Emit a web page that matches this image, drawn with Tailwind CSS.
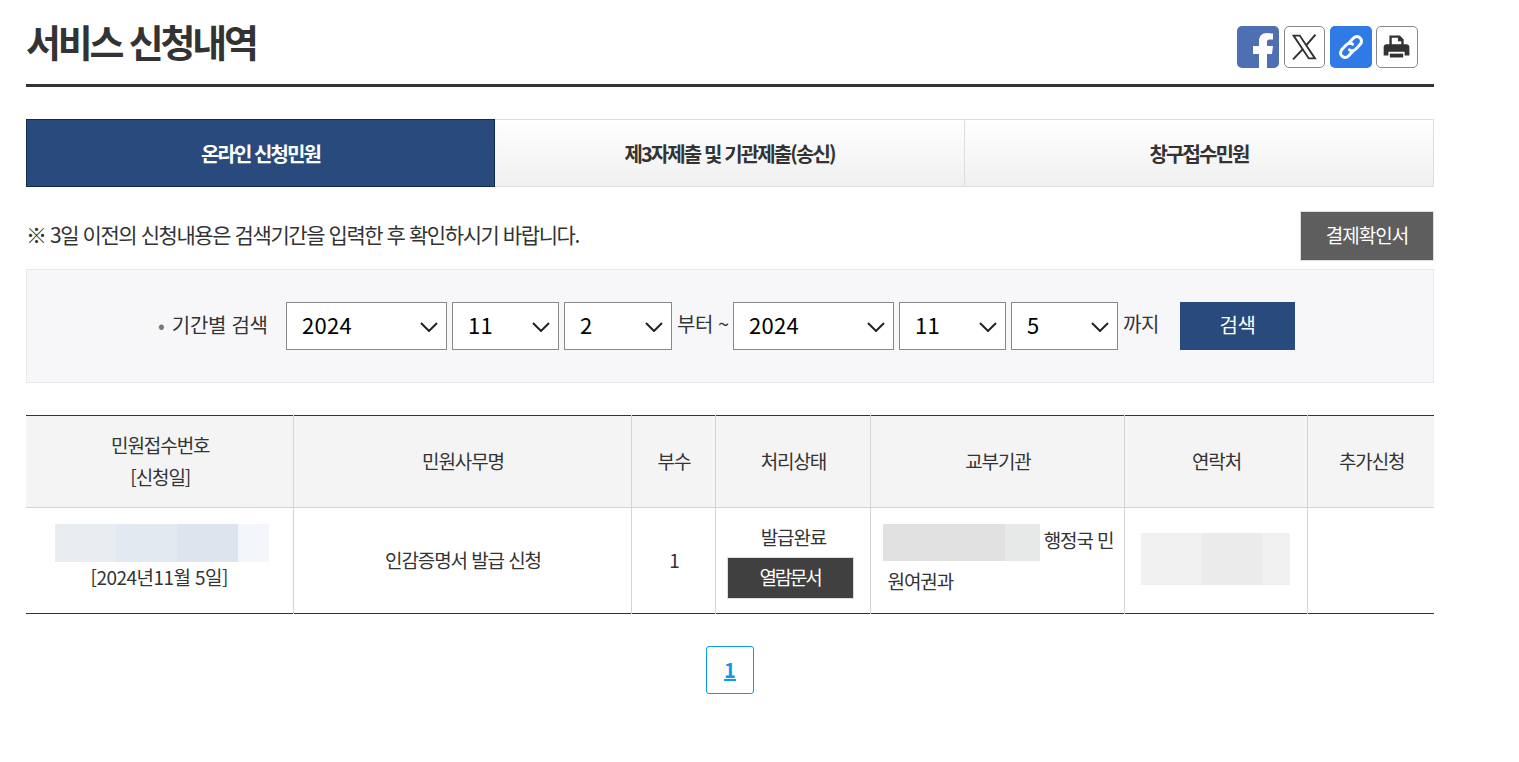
<!DOCTYPE html>
<html lang="ko">
<head>
    <meta charset="UTF-8">
    <title>서비스 신청내역</title>
    <script src="https://cdn.jsdelivr.net/npm/@tailwindcss/browser@4"></script>
</head>
<body class="bg-white text-[#333] [font-family:'Noto_Sans_CJK_KR',sans-serif]">
<main class="w-[1408px] ml-[26px]">

    <!-- Title -->
    <header class="flex justify-between h-[87px] border-b-[3px] border-[#333] pr-4">
        <h1 class="text-[38px] leading-[56px] mt-[13px] font-bold tracking-[-3.200px]">서비스 신청내역</h1>
        <div class="flex mt-[26px] h-[42px]">
            <a href="#" class="w-[42px] h-[42px] rounded-[5px] bg-[#4e6fb1] overflow-hidden block">
                <svg viewBox="0 0 42 42" class="w-full h-full"><path fill="#fff" d="M22 42V28h-6v-8h6v-5c0-5 3-8 8-8 2 0 4 .3 6 .5v6h-3.500c-2 0-2.500 1-2.500 2.500V20h6l-1 8h-5v14z"/></svg>
            </a>
            <a href="#" class="w-[41px] h-[42px] ml-[5px] rounded-[5px] border border-[#888] bg-white block">
                <svg viewBox="0 0 41 42" class="w-full h-full"><path fill="none" stroke="#333" stroke-width="2" d="M9 9h6.500l16 24h-6.500z"/><path fill="none" stroke="#333" stroke-width="2.200" d="M32 8l-9.500 11M19 23L8.500 34"/></svg>
            </a>
            <a href="#" class="w-[42px] h-[42px] ml-[5px] rounded-[5px] bg-[#2f7ae5] block">
                <svg viewBox="0 0 42 42" class="w-full h-full"><g fill="none" stroke="#fff" stroke-width="3" stroke-linecap="round"><path d="M19 17l4-4.500c2.200-2.300 5-2.500 7-.7s2 4.700-.1 7l-4 4.200c-2 2-4.700 2.200-6.400.8"/><path d="M23 25l-4 4.500c-2.200 2.300-5 2.500-7 .7s-2-4.700.1-7l4-4.200c2-2 4.700-2.200 6.400-.8"/></g></svg>
            </a>
            <a href="#" class="w-[42px] h-[42px] ml-1 rounded-[5px] border border-[#888] bg-white block">
                <svg viewBox="0 0 42 42" class="w-full h-full"><path fill="#333" d="M13 9h11l4 4v6h-2.500v-4H22v-3.700h-6.500V19H13z"/><path fill="#333" d="M10 18h21c1.700 0 3 1.300 3 3v9h-5v-4H12v4H7v-9c0-1.700 1.300-3 3-3z"/><path fill="#333" d="M13.500 28h14v4h-14z"/></svg>
            </a>
        </div>
    </header>

    <!-- Tabs -->
    <nav class="flex mt-8 h-[68px] text-[20px] font-bold tracking-[-1.900px]">
        <a href="#" class="w-[469px] pt-[1px] flex items-center justify-center bg-[#294a7c] border border-[#0f2a50] text-white">온라인 신청민원</a>
        <a href="#" class="w-[470px] pt-[1px] flex items-center justify-center border-y border-r border-[#ddd] bg-linear-to-b from-white to-[#f0f0f0] text-[#333]">제3자제출 및 기관제출(송신)</a>
        <a href="#" class="w-[469px] pt-[1px] flex items-center justify-center border-y border-r border-[#ddd] bg-linear-to-b from-white to-[#f0f0f0] text-[#333]">창구접수민원</a>
    </nav>

    <!-- Notice -->
    <div class="flex justify-between items-center mt-6 h-[50px] text-[21px] tracking-[-1.430px]">
        <p class="-mt-[2px]">※ 3일 이전의 신청내용은 검색기간을 입력한 후 확인하시기 바랍니다.</p>
        <button class="w-[134px] h-[50px] bg-[#5e5e5e] border border-[#ddd] text-white text-[19px] tracking-[-1px] pb-[2px]">결제확인서</button>
    </div>

    <!-- Search -->
    <form class="flex items-start h-[114px] mt-2 pl-[131px] pt-8 bg-[#f7f7fa] border border-[#eaeaee] text-[20px] tracking-[-0.500px]">
        <label class="w-[128px] h-12 leading-[46px] tracking-[-0.300px]"><span class="text-[#777] mr-[2px]">•</span> 기간별 검색</label>
        <div class="relative w-[161px] mr-[5px]">
            <select class="w-full h-12 pl-[15px] pb-1 appearance-none bg-white border border-[#888] text-[22px] tracking-[0.300px] text-black"><option>2024</option></select>
            <svg viewBox="0 0 18 10" class="absolute right-[9px] top-[20px] w-[18px] h-[10px]"><path d="M1 1l8 8 8-8" fill="none" stroke="#222" stroke-width="2"/></svg>
        </div>
        <div class="relative w-[107px] mr-[5px]">
            <select class="w-full h-12 pl-[15px] pb-1 appearance-none bg-white border border-[#888] text-[22px] tracking-[0.300px] text-black"><option>11</option></select>
            <svg viewBox="0 0 18 10" class="absolute right-[9px] top-[20px] w-[18px] h-[10px]"><path d="M1 1l8 8 8-8" fill="none" stroke="#222" stroke-width="2"/></svg>
        </div>
        <div class="relative w-[108px] mr-[5px]">
            <select class="w-full h-12 pl-[15px] pb-1 appearance-none bg-white border border-[#888] text-[22px] tracking-[0.300px] text-black"><option>2</option></select>
            <svg viewBox="0 0 18 10" class="absolute right-[9px] top-[20px] w-[18px] h-[10px]"><path d="M1 1l8 8 8-8" fill="none" stroke="#222" stroke-width="2"/></svg>
        </div>
        <span class="w-[56px] h-12 leading-[44px]">부터 ~</span>
        <div class="relative w-[161px] mr-[5px]">
            <select class="w-full h-12 pl-[15px] pb-1 appearance-none bg-white border border-[#888] text-[22px] tracking-[0.300px] text-black"><option>2024</option></select>
            <svg viewBox="0 0 18 10" class="absolute right-[9px] top-[20px] w-[18px] h-[10px]"><path d="M1 1l8 8 8-8" fill="none" stroke="#222" stroke-width="2"/></svg>
        </div>
        <div class="relative w-[107px] mr-[5px]">
            <select class="w-full h-12 pl-[15px] pb-1 appearance-none bg-white border border-[#888] text-[22px] tracking-[0.300px] text-black"><option>11</option></select>
            <svg viewBox="0 0 18 10" class="absolute right-[9px] top-[20px] w-[18px] h-[10px]"><path d="M1 1l8 8 8-8" fill="none" stroke="#222" stroke-width="2"/></svg>
        </div>
        <div class="relative w-[107px] mr-[5px]">
            <select class="w-full h-12 pl-[15px] pb-1 appearance-none bg-white border border-[#888] text-[22px] tracking-[0.300px] text-black"><option>5</option></select>
            <svg viewBox="0 0 18 10" class="absolute right-[9px] top-[20px] w-[18px] h-[10px]"><path d="M1 1l8 8 8-8" fill="none" stroke="#222" stroke-width="2"/></svg>
        </div>
        <span class="w-[57px] h-12 leading-[44px]">까지</span>
        <button type="button" class="w-[115px] h-12 bg-[#294a7c] text-white pb-[2px]">검색</button>
    </form>

    <!-- Table -->
    <table class="w-full table-fixed mt-8 border-t border-b border-t-[#333] border-b-[#333] text-[19px] tracking-[-1.100px] text-center">
        <colgroup>
            <col class="w-[267px]"><col class="w-[338px]"><col class="w-[84px]"><col class="w-[155px]"><col class="w-[254px]"><col class="w-[183px]"><col class="w-[127px]">
        </colgroup>
        <thead>
            <tr class="h-[92px] bg-[#f4f4f4]">
                <th class="font-normal pl-[2px] border-r border-b border-[#d4d4d4] leading-[32px] pb-[2px]">민원접수번호<br>[신청일]</th>
                <th class="font-normal pl-[2px] border-r border-b border-[#d4d4d4]">민원사무명</th>
                <th class="font-normal pl-[2px] border-r border-b border-[#d4d4d4]">부수</th>
                <th class="font-normal pl-[2px] border-r border-b border-[#d4d4d4]">처리상태</th>
                <th class="font-normal pl-[2px] border-r border-b border-[#d4d4d4]">교부기관</th>
                <th class="font-normal pl-[2px] border-r border-b border-[#d4d4d4]">연락처</th>
                <th class="font-normal pl-[2px] border-b border-[#d4d4d4]">추가신청</th>
            </tr>
        </thead>
        <tbody>
            <tr class="h-[106px]">
                <td class="border-r border-[#d4d4d4] pb-2">
                    <div class="flex w-[214px] h-[38px] ml-[29px] mb-[1px]">
                        <span class="w-[61px] bg-[#e8edf2]"></span><span class="w-[61px] bg-[#e3e9f0]"></span><span class="w-[61px] bg-[#dde4ee]"></span><span class="w-[31px] bg-[#f3f7fb]"></span>
                    </div>
                    <div class="leading-[26px] tracking-[-0.550px] pt-[1px]">[2024년11월 5일]</div>
                </td>
                <td class="pl-[2px] border-r border-[#d4d4d4]">인감증명서 발급 신청</td>
                <td class="pl-[2px] border-r border-[#d4d4d4]">1</td>
                <td class="border-r border-[#d4d4d4]">
                    <div class="leading-[28px] mb-[6px] pl-[2px]">발급완료</div>
                    <a href="#" class="block w-[127px] h-[42px] leading-[38px] ml-[11px] bg-[#404040] border border-[#ddd] text-white tracking-[-2.200px]">열람문서</a>
                </td>
                <td class="border-r border-[#d4d4d4] text-left pl-[17px] pr-2 leading-[40px]">
                    <span class="inline-flex align-middle w-[157px] h-[37px] -ml-[5px]"><span class="w-[122px] bg-[#e1e1e1]"></span><span class="w-[35px] bg-[#e7e8e8]"></span></span>
                    행정국 민<br>원여권과
                </td>
                <td class="border-r border-[#d4d4d4] pb-1">
                    <div class="flex w-[149px] h-[52px] mx-auto">
                        <span class="w-[61px] bg-[#f0f0f0]"></span><span class="w-[60px] bg-[#ebebeb]"></span><span class="w-[28px] bg-[#f0f0f0]"></span>
                    </div>
                </td>
                <td></td>
            </tr>
        </tbody>
    </table>

    <!-- Paging -->
    <div class="flex justify-center mt-8">
        <a href="#" class="w-12 h-12 flex items-center justify-center rounded-[3px] border border-[#0b9bea] bg-white text-[#0b9bea] text-[20px] font-bold underline">1</a>
    </div>
</main>
</body>
</html>
